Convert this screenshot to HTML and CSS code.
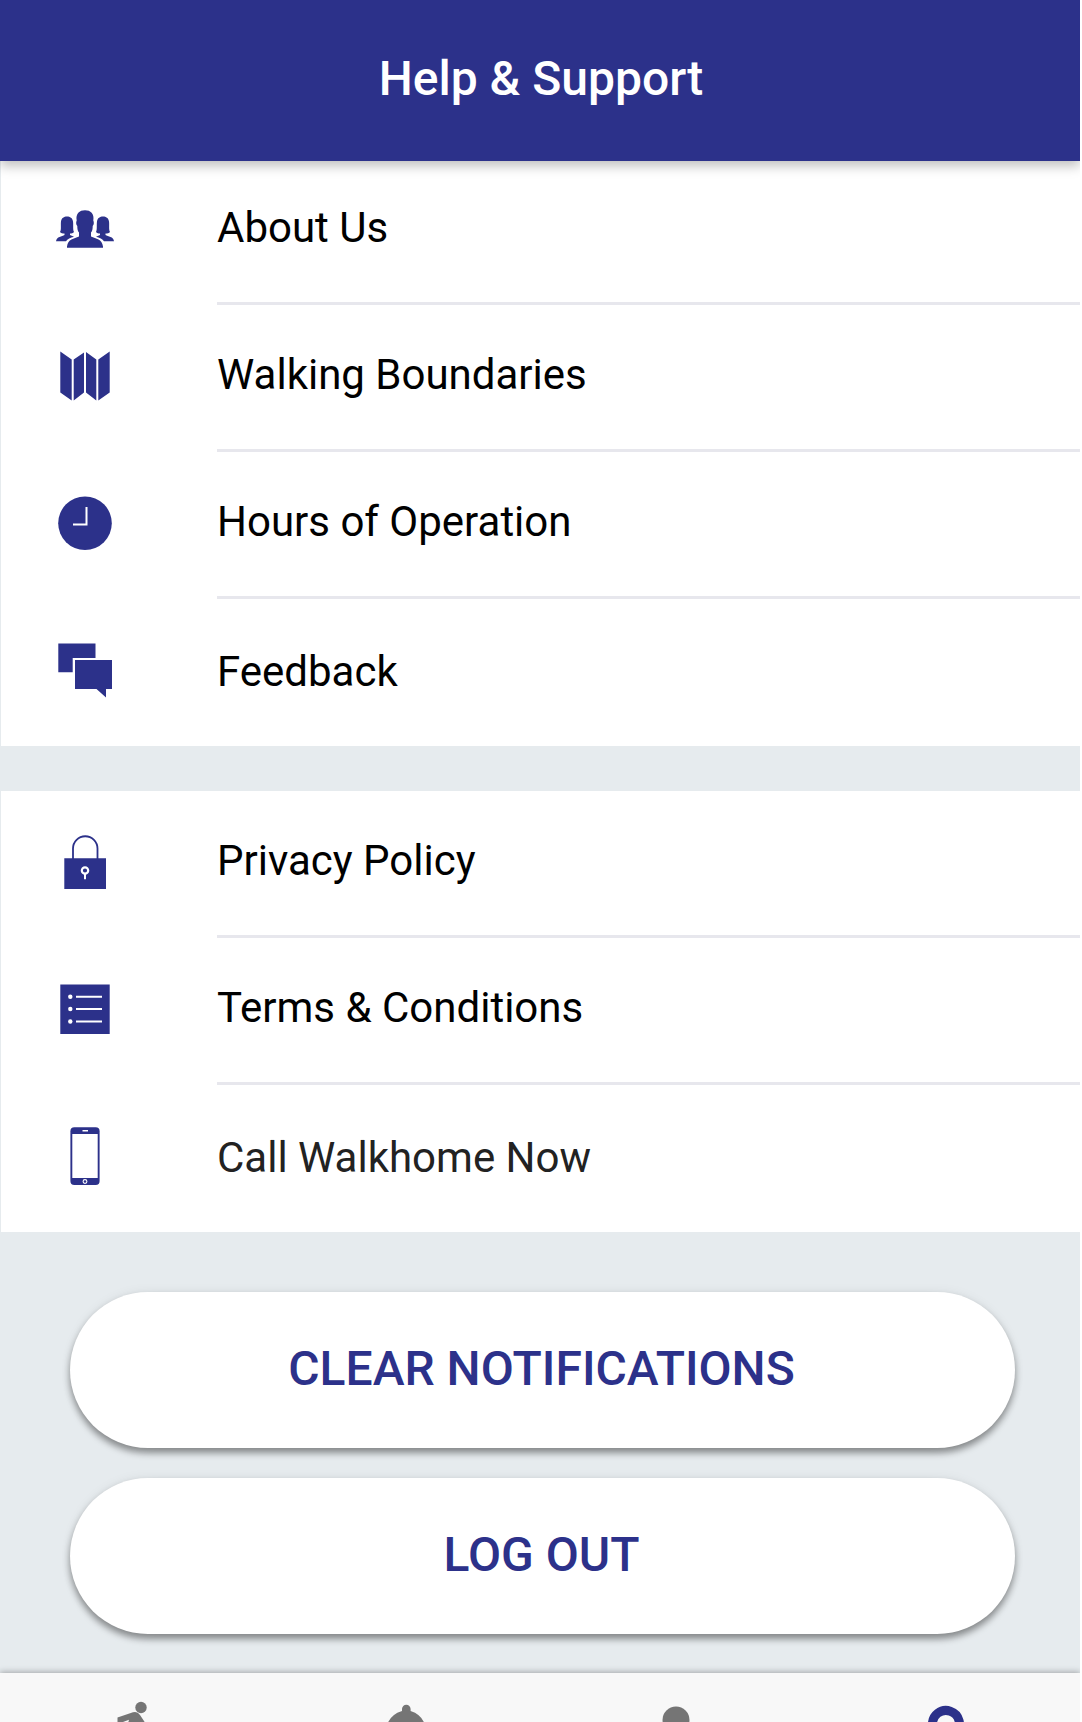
FILE: index.html
```html
<!DOCTYPE html>
<html lang="en">
<head>
<meta charset="utf-8">
<meta name="viewport" content="width=device-width, initial-scale=1">
<title>Help &amp; Support</title>
<link rel="stylesheet" href="styles.css">
</head>
<body>
<div class="page">
  <header class="header"><h1 class="title">Help &amp; Support</h1></header>
  <main class="content">
    <ul class="list list-first">
      <li><a class="row" href="#about">
        <svg class="icon" viewBox="0 0 60 60"><path d="M12 47.500C13 39.500 19 40 24 37.500V33.500C22.500 32 22.300 29 22.300 27C20.800 25.500 21 23 21.700 21.500C20.500 14.500 24.500 11.300 30 11.300S39.500 14.500 38.300 21.500C39 23 39.200 25.500 37.700 27C37.700 29 37.500 32 36 33.500V37.500C41 40 47 39.500 48 47.500V48.800H12z"/><path d="M1 42.300C1.500 37.500 7 37.500 9.500 36V34.500C7.500 34.500 6 34 5 33C6.500 31 5.500 26 6 22.500C6.500 19 9 17.600 12 17.600S17.500 19 18 22.500C18.500 26 17.700 31 19 33C18 34 16.500 34.500 15 34.500V36L19 37.700C15.500 38.800 12.300 40 11 42.300z"/><path d="M59 42.300C58.500 37.500 53 37.500 50.500 36V34.500C52.500 34.500 54 34 55 33C53.500 31 54.500 26 54 22.500C53.500 19 51 17.600 48 17.600S42.500 19 42 22.500C41.500 26 42.300 31 41 33C42 34 43.500 34.500 45 34.500V36L41 37.700C44.500 38.800 47.700 40 49 42.300z"/></svg>
        <span class="label">About Us</span></a></li>
      <li><a class="row" href="#boundaries">
        <svg class="icon" viewBox="0 0 60 60"><path d="M5.300 5.500L16.700 13.500V54.500L5.300 46.500zM18.700 13.500L29 6.500V46.500L18.700 54.500zM31 6L41.300 13.500V54.500L31 46.500zM43.300 13.500L54.700 5.500V46.500L43.300 54.500z"/></svg>
        <span class="label">Walking Boundaries</span></a></li>
      <li><a class="row" href="#hours">
        <svg class="icon" viewBox="0 0 60 60"><circle cx="30" cy="30.300" r="26.800"/><path d="M31.500 14V31.500H18" fill="none" stroke="#fff" stroke-width="2"/></svg>
        <span class="label">Hours of Operation</span></a></li>
      <li><a class="row" href="#feedback">
        <svg class="icon" viewBox="0 0 60 60"><path d="M3.300 3.400H40.500V18H17.700V32.200H3.300z"/><path d="M20 20H57V49H51V57.500L41.500 49H20z"/></svg>
        <span class="label">Feedback</span></a></li>
    </ul>
    <ul class="list">
      <li><a class="row" href="#privacy">
        <svg class="icon" viewBox="0 0 60 60"><path d="M18 28V16.500A12 12 0 0 1 42.500 16.500V28" fill="none" stroke="#2c318a" stroke-width="1.800"/><path d="M9.300 26.300H51V57H9.300z"/><circle cx="30" cy="38.500" r="3.200" fill="none" stroke="#fff" stroke-width="2.200"/><path d="M29 41H31V47.300H29z" fill="#fff"/></svg>
        <span class="label">Privacy Policy</span></a></li>
      <li><a class="row" href="#terms">
        <svg class="icon" viewBox="0 0 60 60"><path d="M5.300 5.400H54.700V55H5.300z"/><g fill="#fff"><circle cx="15.300" cy="17.800" r="2.200"/><circle cx="15.300" cy="30" r="2.200"/><circle cx="15.300" cy="42.500" r="2.200"/><path d="M21 16.800H47V18.800H21zM21 29H47V31H21zM21 41.500H47V43.500H21z"/></g></svg>
        <span class="label">Terms &amp; Conditions</span></a></li>
      <li><a class="row" href="tel:">
        <svg class="icon" viewBox="0 0 60 60"><rect x="15.400" y="1.200" width="29.200" height="57.800" rx="4"/><path d="M17.300 8H42.700V52H17.300z" fill="#fff"/><rect x="27.500" y="4" width="5.500" height="1.500" fill="#fff"/><circle cx="30" cy="55.500" r="1.900" fill="none" stroke="#fff" stroke-width="1.100"/></svg>
        <span class="label label-soft">Call Walkhome Now</span></a></li>
    </ul>
    <div class="actions">
      <button class="pill" type="button">CLEAR NOTIFICATIONS</button>
      <button class="pill" type="button">LOG OUT</button>
    </div>
  </main>
  <nav class="tabs">
    <a class="tab" href="#walk" aria-label="Walk"><svg viewBox="0 0 72 72"><circle cx="41" cy="8.500" r="5.700"/><path d="M17.500 18.500L33 13.300Q37.500 12 40 16L46 25L56 31L54 36L42 30L38 43L46 53V70H40V56L26 45V31L29 20.800L23 23V33H17.500z"/></svg></a>
    <a class="tab" href="#alerts" aria-label="Notifications"><svg viewBox="0 0 72 72"><path d="M32 12V10A4.300 4.300 0 0 1 40.600 10V12Q56 17 56 34V48L62 54V58H10V54L16 48V34Q16 17 32 12z"/></svg></a>
    <a class="tab" href="#profile" aria-label="Profile"><svg viewBox="0 0 72 72"><circle cx="36" cy="21" r="13.500"/><path d="M9 63Q9 41 36 41T63 63z"/></svg></a>
    <a class="tab tab-active" href="#help" aria-label="Help"><svg viewBox="0 0 72 72"><path d="M22.500 26A13.500 13.500 0 1 1 46 34Q36 40 36 50" fill="none" stroke="#2c318a" stroke-width="9"/><circle cx="36" cy="61" r="5"/></svg></a>
  </nav>
</div>
</body>
</html>
```
FILE: styles.css
```css
* { box-sizing: border-box; }
body { margin: 0; background: #fff; font-family: Roboto, sans-serif; }
.page {
  display: flex;
  flex-direction: column;
  height: 100vh;
  margin-right: 2px;
  overflow: hidden;
  background: #e6ebee;
}
.header {
  flex: none;
  position: relative;
  z-index: 1;
  padding: 51px 16px 54px 18px;
  background: #2c318a;
  box-shadow: 0 5px 11px rgba(0, 0, 0, 0.25);
}
.title {
  margin: 0;
  color: #fff;
  font-size: 48px;
  font-weight: 500;
  line-height: 56px;
  text-align: center;
}
.content { flex: none; }
.list {
  margin: 0 0 45px 1px;
  padding: 0;
  list-style: none;
  background: #fff;
}
.list-first { margin-top: -3px; }
.row {
  display: grid;
  grid-template-columns: 60px 1fr;
  column-gap: 102px;
  padding-left: 54px;
  color: #000;
  font-size: 42px;
  line-height: 50px;
  text-decoration: none;
}
.icon {
  width: 60px;
  height: 60px;
  margin-top: 41px;
  fill: #2c318a;
}
.label {
  padding: 45px 0 49px;
  border-bottom: 3px solid #e7e7ed;
}
li:last-child .label {
  padding: 48px 0 49px;
  border-bottom: 0;
}
.label-soft { color: #222; }
.actions {
  display: grid;
  gap: 30px;
  margin: 60px 65px 39px 70px;
}
.pill {
  padding: 49px 26px 51px 24px;
  border: 0;
  border-radius: 78px;
  background: #fff;
  box-shadow: 0 5px 7px rgba(0, 0, 0, 0.4), 0 0 12px rgba(0, 0, 0, 0.06);
  color: #2c318a;
  font-family: inherit;
  font-size: 48px;
  font-weight: 500;
  line-height: 56px;
}
.tabs {
  flex: none;
  display: grid;
  grid-template-columns: repeat(4, 1fr);
  background: #f8f8f8;
  box-shadow: 0 -1px 6px rgba(0, 0, 0, 0.3);
}
.tab {
  display: flex;
  justify-content: center;
  padding: 26px 0 24px 1px;
}
.tab svg {
  width: 72px;
  height: 72px;
  fill: #757575;
}
.tab-active svg { fill: #2c318a; }
```
